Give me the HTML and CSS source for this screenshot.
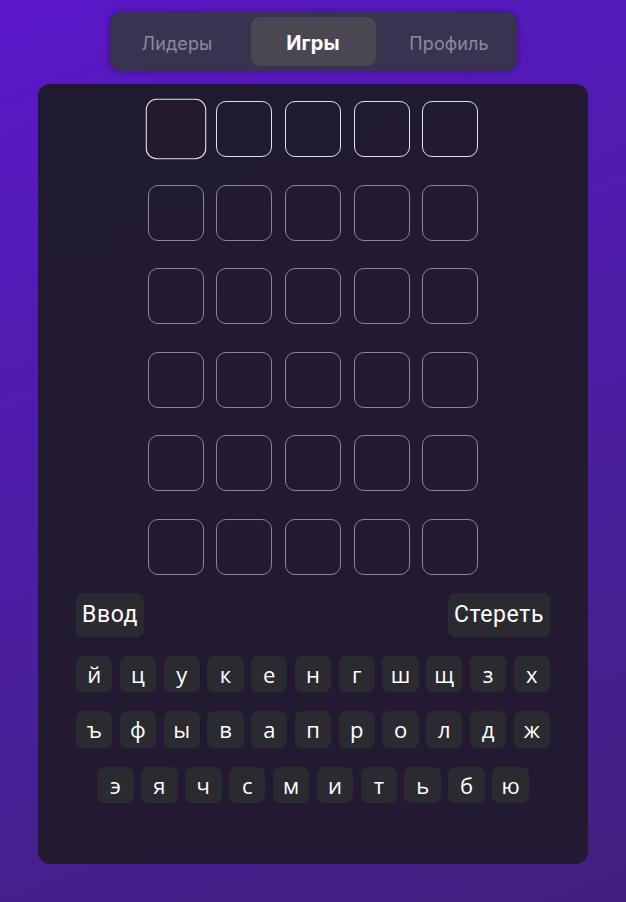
FILE: index.html
```html
<!DOCTYPE html>
<html lang="ru">
<head>
<meta charset="utf-8">
<title>Игры</title>
<link rel="stylesheet" href="styles.css">
</head>
<body>
<div class="app">
  <nav class="tabs">
    <div class="tab">Лидеры</div>
    <div class="tab active">Игры</div>
    <div class="tab">Профиль</div>
  </nav>
  <main class="panel">
    <div class="board">
      <div class="row current">
        <div class="cell selected"></div><div class="cell"></div><div class="cell"></div><div class="cell"></div><div class="cell"></div>
      </div>
      <div class="row"><div class="cell"></div><div class="cell"></div><div class="cell"></div><div class="cell"></div><div class="cell"></div></div>
      <div class="row"><div class="cell"></div><div class="cell"></div><div class="cell"></div><div class="cell"></div><div class="cell"></div></div>
      <div class="row"><div class="cell"></div><div class="cell"></div><div class="cell"></div><div class="cell"></div><div class="cell"></div></div>
      <div class="row"><div class="cell"></div><div class="cell"></div><div class="cell"></div><div class="cell"></div><div class="cell"></div></div>
      <div class="row"><div class="cell"></div><div class="cell"></div><div class="cell"></div><div class="cell"></div><div class="cell"></div></div>
    </div>
    <div class="keyboard">
      <div class="actions">
        <button class="action">Ввод</button>
        <button class="action">Стереть</button>
      </div>
      <div class="krow">
        <button class="key">й</button><button class="key">ц</button><button class="key">у</button><button class="key">к</button><button class="key">е</button><button class="key">н</button><button class="key">г</button><button class="key">ш</button><button class="key">щ</button><button class="key">з</button><button class="key">х</button>
      </div>
      <div class="krow">
        <button class="key">ъ</button><button class="key">ф</button><button class="key">ы</button><button class="key">в</button><button class="key">а</button><button class="key">п</button><button class="key">р</button><button class="key">о</button><button class="key">л</button><button class="key">д</button><button class="key">ж</button>
      </div>
      <div class="krow">
        <button class="key">э</button><button class="key">я</button><button class="key">ч</button><button class="key">с</button><button class="key">м</button><button class="key">и</button><button class="key">т</button><button class="key">ь</button><button class="key">б</button><button class="key">ю</button>
      </div>
    </div>
  </main>
</div>
</body>
</html>
```
FILE: styles.css
```css
* { box-sizing: border-box; }
html, body { margin: 0; height: 100%; }
body {
  background: linear-gradient(160deg, #5a17c8 0%, #4d1ea8 45%, #43207e 100%);
  font-family: "Open Sans", "Noto Sans", sans-serif;
  color: #fff;
  overflow: hidden;
}
.app {
  display: flex;
  flex-direction: column;
  align-items: center;
  padding-top: 12px;
}
.tabs {
  display: grid;
  grid-template-columns: 125px 125px 125px;
  gap: 11px;
  padding: 5px;
  width: 407px;
  height: 59px;
  border-radius: 12px;
  background: #3a3350;
  box-shadow: 0 0 6px rgba(30, 10, 60, 0.55);
}
.tab {
  display: flex;
  align-items: center;
  justify-content: center;
  padding-top: 3px;
  border-radius: 9px;
  font-family: Inter, "Noto Sans", sans-serif;
  font-size: 18px;
  color: #8d889b;
  letter-spacing: 0.1px;
}
.tab.active {
  background: #4a4753;
  color: #fff;
  font-weight: 700;
  font-size: 20px;
}
.panel {
  margin-top: 13px;
  width: 550px;
  height: 780px;
  border-radius: 12px;
  background: linear-gradient(160deg, #201a30 0%, #221a31 60%, #231a33 100%);
  padding-top: 17px;
  display: flex;
  flex-direction: column;
  align-items: center;
}
.board {
  display: grid;
  grid-template-rows: repeat(6, 56px);
  row-gap: 27.5px;
}
.row {
  display: grid;
  grid-template-columns: repeat(5, 56px);
  column-gap: 12.6px;
}
.cell {
  border: 1px solid #8b8499;
  border-radius: 10px;
}
.row.current .cell {
  border: 1.5px solid #e4e0ea;
}
.row.current .cell.selected {
  transform: scale(1.08);
  background: #231a2e;
}
.keyboard {
  width: 474px;
  margin-top: 18px;
  display: flex;
  flex-direction: column;
  gap: 19px;
}
.actions {
  display: flex;
  justify-content: space-between;
}
button {
  border: none;
  color: #fff;
  cursor: pointer;
}
.action {
  height: 44px;
  padding: 0 6px;
  border-radius: 7px;
  background: #2c2a31;
  font-family: Roboto, "Noto Sans", sans-serif;
  font-size: 23px;
  letter-spacing: 0.6px;
}
.krow {
  display: flex;
  justify-content: center;
  gap: 7.3px;
}
.key {
  width: 36.6px;
  height: 36.6px;
  padding: 0;
  border-radius: 7px;
  background: #2c2a31;
  font-family: "Open Sans", "Noto Sans", sans-serif;
  font-size: 22px;
  font-weight: 500;
  line-height: 1;
}
```
